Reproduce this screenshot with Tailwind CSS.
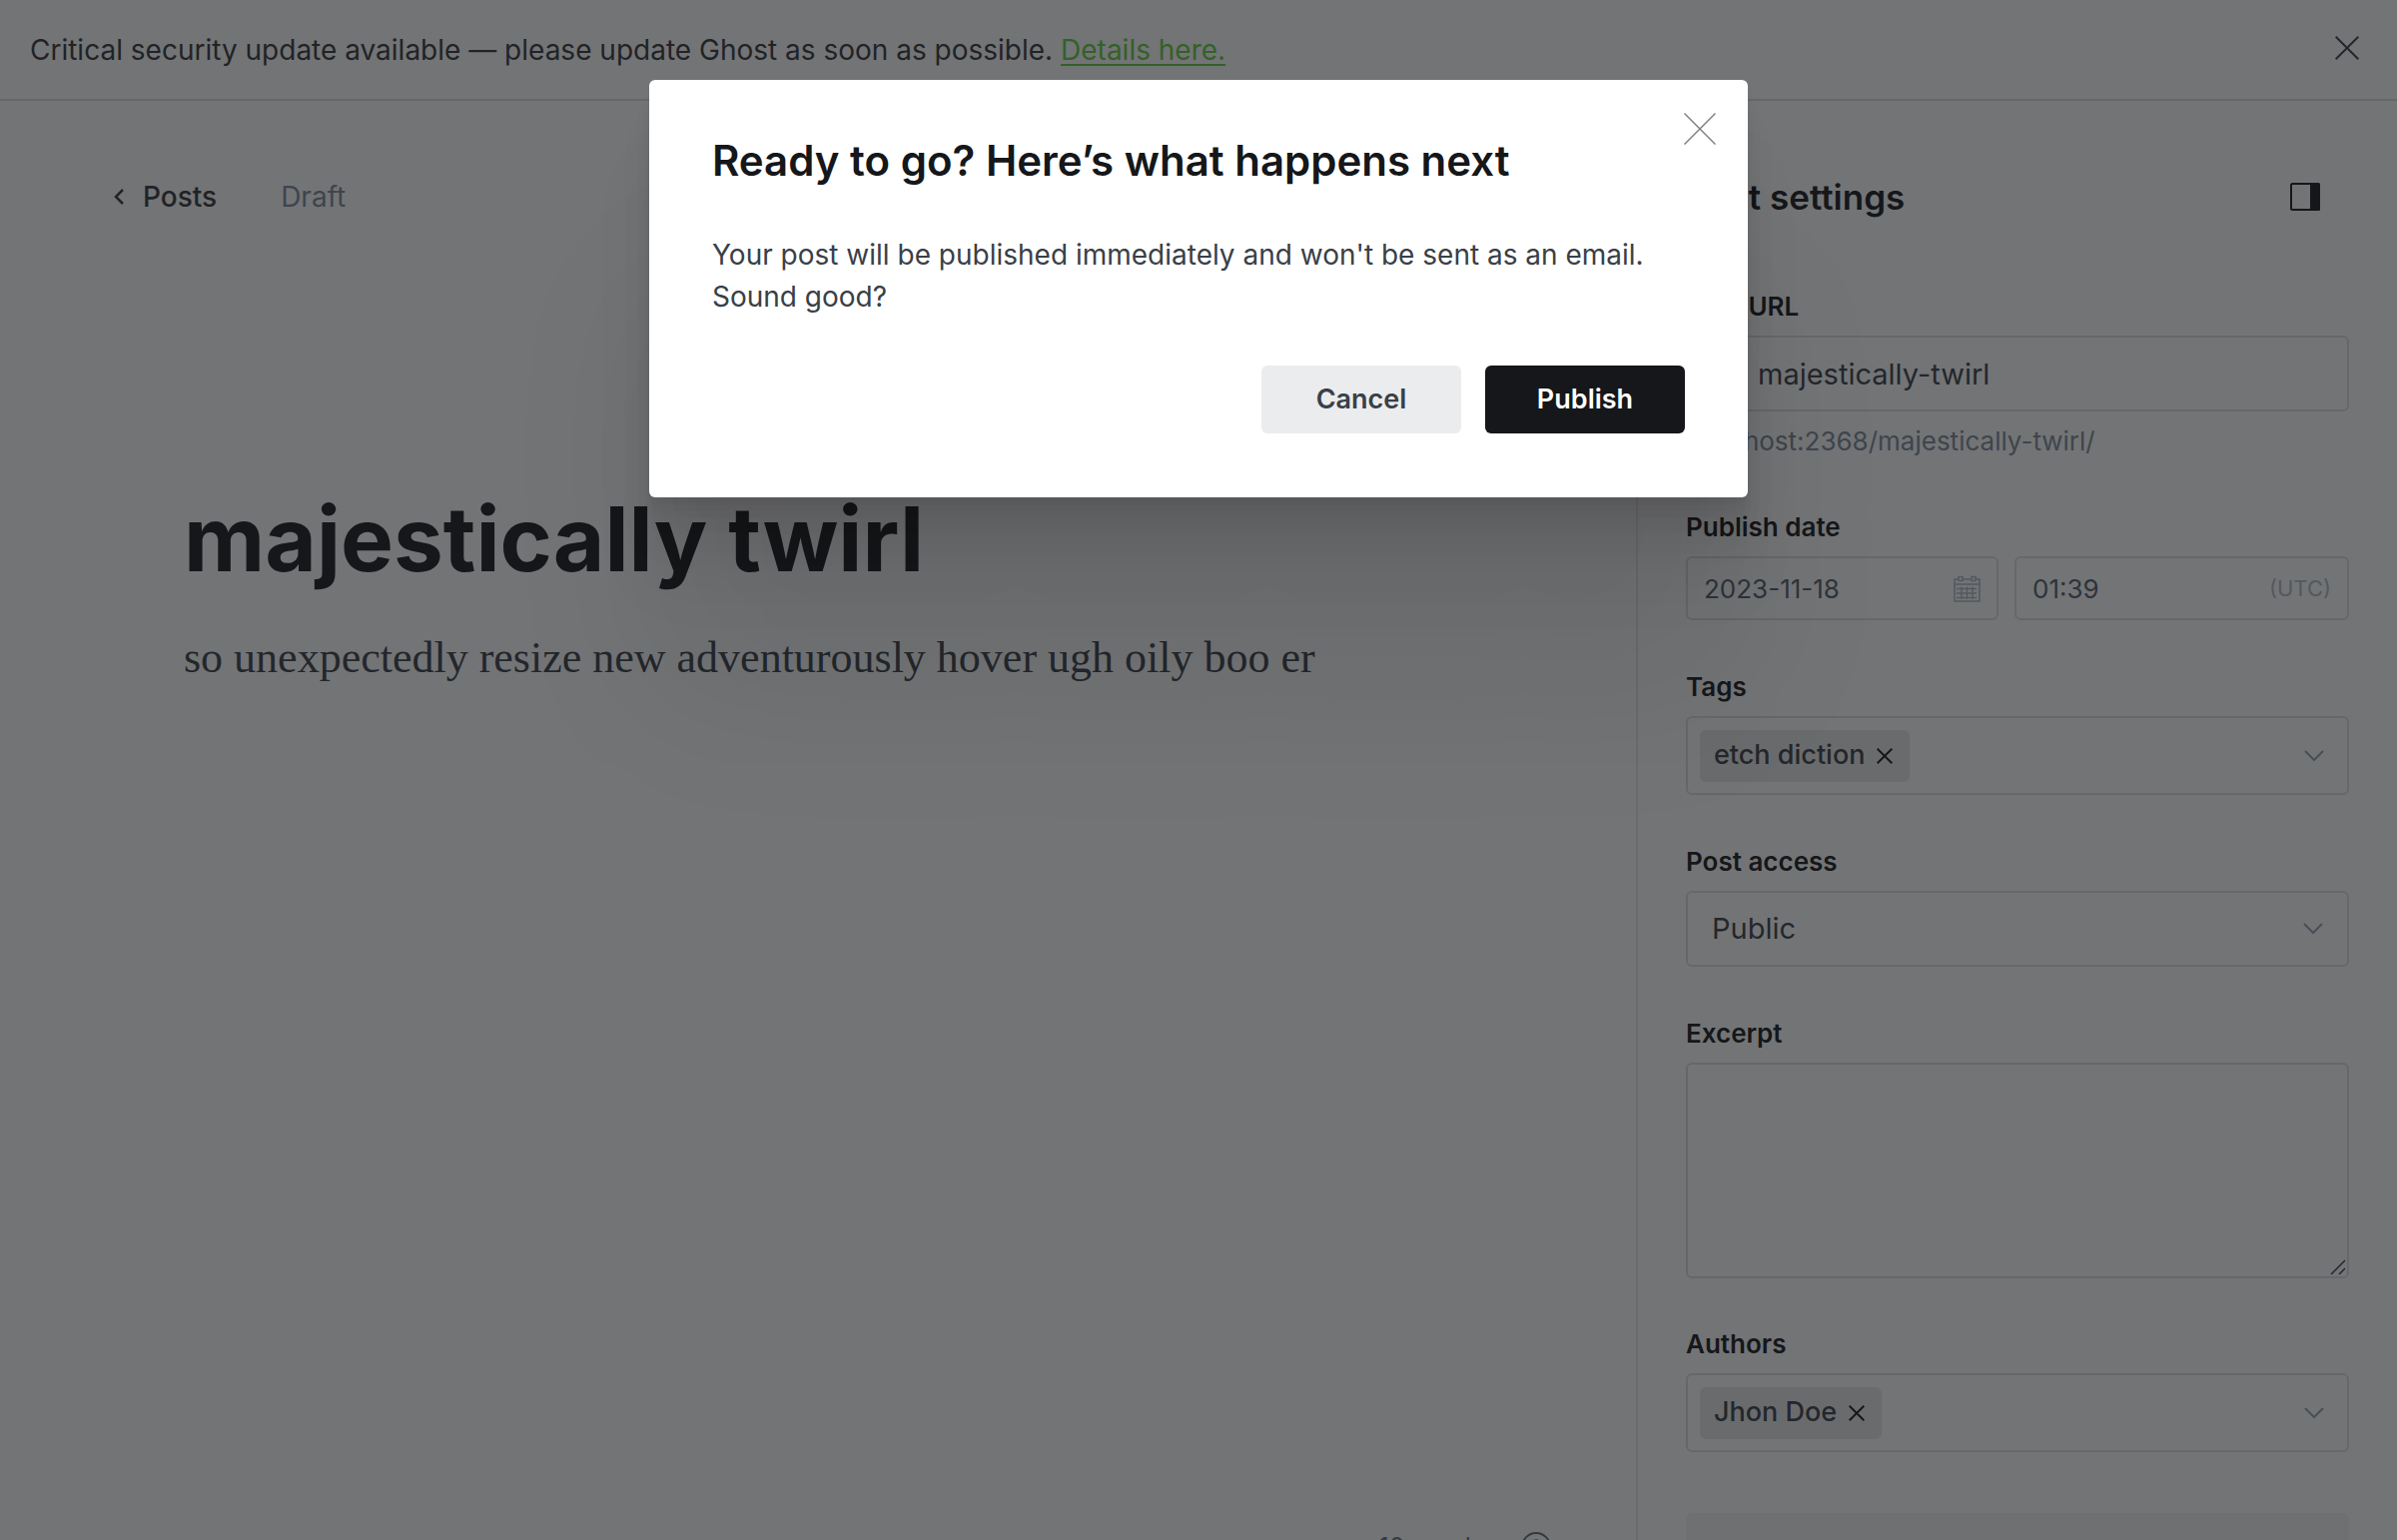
<!DOCTYPE html>
<html lang="en">
<head>
<meta charset="utf-8">
<title>majestically twirl - Ghost</title>
<script src="https://cdn.jsdelivr.net/npm/@tailwindcss/browser@4"></script>
</head>
<body class="relative flex h-screen flex-col overflow-hidden bg-white font-['Inter',sans-serif] text-[28px] text-[#394047]">

<!-- Update notice -->
<header class="flex h-[101px] shrink-0 items-center justify-between border-b-2 border-[#dce0e4] px-[30px]">
  <p class="text-[#343538]">Critical security update available — please update Ghost as soon as possible. <a href="#details" class="text-[#5fcf3a] underline decoration-2 underline-offset-4">Details here.</a></p>
  <button type="button" aria-label="Dismiss notice" class="mr-2 mb-1 size-6">
    <svg class="size-6" viewBox="0 0 24 24" fill="none" stroke="#394047" stroke-width="2"><path d="M.7.7l22.6 22.6M23.3.7L.7 23.3"/></svg>
  </button>
</header>

<div class="flex min-h-0 grow">
  <!-- Editor -->
  <main class="relative flex min-w-0 grow flex-col">
    <nav class="flex h-[192px] items-start gap-16 pt-[76px] pl-[112px] leading-[40px]">
      <a href="#posts" class="flex items-center gap-[18px] font-medium text-[#343538]">
        <svg class="h-4 w-[13px]" viewBox="0 0 13 16" fill="none" stroke="#343538" stroke-width="2.500"><path d="M11 1L4 8l7 7"/></svg>
        Posts
      </a>
      <span class="text-[#7c8b9a]">Draft</span>
    </nav>
    <article class="pt-[189px] pr-10 pl-[184px]">
      <h1 class="text-[89px] leading-[116px] font-bold text-[#15171a]">majestically twirl</h1>
      <p class="mt-[31px] font-['Liberation_Serif',serif] text-[44px] leading-[60px] text-[#394047]">so unexpectedly resize new adventurously hover ugh oily boo er</p>
    </article>
    <footer class="absolute right-[85px] -bottom-[23px] flex items-center gap-[37px] text-[25px] leading-[32px] text-[#626d79]">
      <span>10 words</span>
      <svg class="size-[30px]" viewBox="0 0 30 30" fill="none" stroke="#626d79" stroke-width="2"><circle cx="15" cy="15" r="14"/><path d="M10.500 13a4.500 4 0 1 1 6.500 3q-2 1-2 3M15 21v2"/></svg>
    </footer>
  </main>

  <!-- Post settings -->
  <aside class="w-[762px] shrink-0 overflow-hidden border-l-2 border-[#e5e8eb] pr-12 pl-[48px]">
    <div class="flex h-[190px] items-start justify-between pt-[76px] pr-[29px]">
      <h2 class="text-[35px] leading-[40px] font-semibold text-[#15171a]">Post settings</h2>
      <button type="button" aria-label="Toggle settings panel" class="mt-[6px]">
        <svg class="h-7 w-[30px]" viewBox="0 0 30 28"><rect x="1" y="1" width="28" height="26" rx="1.500" fill="none" stroke="#15171a" stroke-width="2"/><path d="M20 0h8.500q1.500 0 1.500 1.500v25q0 1.500-1.500 1.500H20z" fill="#15171a"/></svg>
      </button>
    </div>
    <form class="flex flex-col">
      <label for="url" class="text-[26px] leading-[32px] font-semibold text-[#15171a]">Post URL</label>
      <input id="url" value="majestically-twirl" class="mt-[13px] h-[76px] rounded-md border-2 border-[#dce0e4] pl-[70px] text-[29px] text-[#394047]">
      <p class="mt-[13px] text-[26px] leading-[34px] text-[#7c8b9a]">localhost:2368/majestically-twirl/</p>

      <label for="date" class="mt-[53px] text-[26px] leading-[32px] font-semibold text-[#15171a]">Publish date</label>
      <div class="mt-[13px] flex gap-4">
        <div class="flex h-16 w-[313px] items-center rounded-md border-2 border-[#dce0e4] px-4">
          <input id="date" value="2023-11-18" class="min-w-0 grow text-[26px] text-[#54606c]">
          <svg class="size-[27px] shrink-0" viewBox="0 0 27 27" fill="none" stroke="#aebbc5" stroke-width="1.500"><path d="M5 4H1v22h25V4h-4M9 4h9M1 9h25M5 1.500h4v4H5zM18 1.500h4v4h-4zM3 13.500h20M3 18h20M3 22.500h20M8 11.500v12.500M13.500 11.500v12.500M19 11.500v12.500"/></svg>
        </div>
        <div class="flex h-16 min-w-0 grow items-center rounded-md border-2 border-[#dce0e4] px-4">
          <input aria-label="Publish time" value="01:39" class="min-w-0 grow text-[26px] text-[#54606c]">
          <span class="text-[22px] text-[#aebbc5]">(UTC)</span>
        </div>
      </div>

      <h3 class="mt-[51px] text-[26px] leading-[32px] font-semibold text-[#15171a]">Tags</h3>
      <div class="mt-[13px] flex h-[79px] items-center justify-between rounded-md border-2 border-[#dce0e4] pr-[23px] pl-3">
        <span class="flex h-[52px] items-center gap-3 rounded-md bg-[#e9e9e9] pr-[17px] pl-[14px] text-[27px] font-medium">etch diction
          <button type="button" aria-label="Remove etch diction"><svg class="size-4" viewBox="0 0 16 16" fill="none" stroke="#15171a" stroke-width="2"><path d="M.7.7l14.600 14.600M15.300.7L.7 15.300"/></svg></button>
        </span>
        <button type="button" aria-label="Show tags"><svg class="h-3 w-5" viewBox="0 0 20 12" fill="none" stroke="#95a1ad" stroke-width="2"><path d="M1 1l9 9 9-9"/></svg></button>
      </div>

      <label for="access" class="mt-[51px] text-[26px] leading-[32px] font-semibold text-[#15171a]">Post access</label>
      <div class="relative mt-[13px] grid">
        <select id="access" class="h-[76px] appearance-none rounded-md border-2 border-[#dce0e4] pl-6 text-[29px] text-[#394047]"><option>Public</option></select>
        <svg class="pointer-events-none absolute top-8 right-[26px] h-3 w-5" viewBox="0 0 20 12" fill="none" stroke="#95a1ad" stroke-width="2"><path d="M1 1l9 9 9-9"/></svg>
      </div>

      <label for="excerpt" class="mt-[51px] text-[26px] leading-[32px] font-semibold text-[#15171a]">Excerpt</label>
      <div class="relative mt-[13px] grid">
        <textarea id="excerpt" class="h-[216px] resize-none rounded-md border-2 border-[#dce0e4]"></textarea>
        <svg class="pointer-events-none absolute right-[3px] bottom-[3px] size-4" viewBox="0 0 16 16" fill="none" stroke="#394047" stroke-width="1.500"><path d="M1 15L15 1M9 15l6-6"/></svg>
      </div>

      <h3 class="mt-[50px] text-[26px] leading-[32px] font-semibold text-[#15171a]">Authors</h3>
      <div class="mt-[13px] flex h-[79px] items-center justify-between rounded-md border-2 border-[#dce0e4] pr-[23px] pl-3">
        <span class="flex h-[52px] items-center gap-3 rounded-md bg-[#e9e9e9] pr-[17px] pl-[14px] text-[27px] font-medium">Jhon Doe
          <button type="button" aria-label="Remove Jhon Doe"><svg class="size-4" viewBox="0 0 16 16" fill="none" stroke="#15171a" stroke-width="2"><path d="M.7.7l14.600 14.600M15.300.7L.7 15.300"/></svg></button>
        </span>
        <button type="button" aria-label="Show authors"><svg class="h-3 w-5" viewBox="0 0 20 12" fill="none" stroke="#95a1ad" stroke-width="2"><path d="M1 1l9 9 9-9"/></svg></button>
      </div>

      <button type="button" class="mt-[61px] rounded-md bg-[#f4f5f6] px-6 py-[22px] text-left text-[26px] leading-[32px] font-semibold text-[#15171a]">Meta data</button>
    </form>
  </aside>
</div>

<!-- Publish confirmation -->
<div class="absolute inset-0 flex items-start justify-center bg-[#15171a]/60 pt-20">
  <section role="dialog" aria-modal="true" aria-labelledby="dialog-title" class="relative w-[1100px] rounded-md bg-white px-[63px] pt-[56px] pb-16 shadow-[0_6px_4px_rgba(0,0,0,0.02),0_13px_11px_rgba(0,0,0,0.028),0_25px_20px_rgba(0,0,0,0.035),0_45px_36px_rgba(0,0,0,0.042),0_84px_67px_rgba(0,0,0,0.05),0_200px_160px_rgba(0,0,0,0.07)]">
    <button type="button" aria-label="Close" class="absolute top-[33px] right-8 size-8">
      <svg class="size-8" viewBox="0 0 32 32" fill="none" stroke="#7f8285" stroke-width="1.500"><path d="M.5.5l31 31M31.500.5l-31 31"/></svg>
    </button>
    <h1 id="dialog-title" class="text-[42px] leading-[50px] font-semibold text-[#15171a]">Ready to go? Here’s what happens next</h1>
    <p class="mt-[48px] leading-[42px]">Your post will be published immediately and won't be sent as an email.<br>Sound good?</p>
    <div class="mt-[48px] flex justify-end gap-6">
      <button type="button" class="h-[68px] w-[200px] rounded-md bg-[#ebecee] text-[27px] font-semibold">Cancel</button>
      <button type="button" class="h-[68px] w-[200px] rounded-md bg-[#15171a] text-[27px] font-semibold text-white">Publish</button>
    </div>
  </section>
</div>
</body>
</html>
